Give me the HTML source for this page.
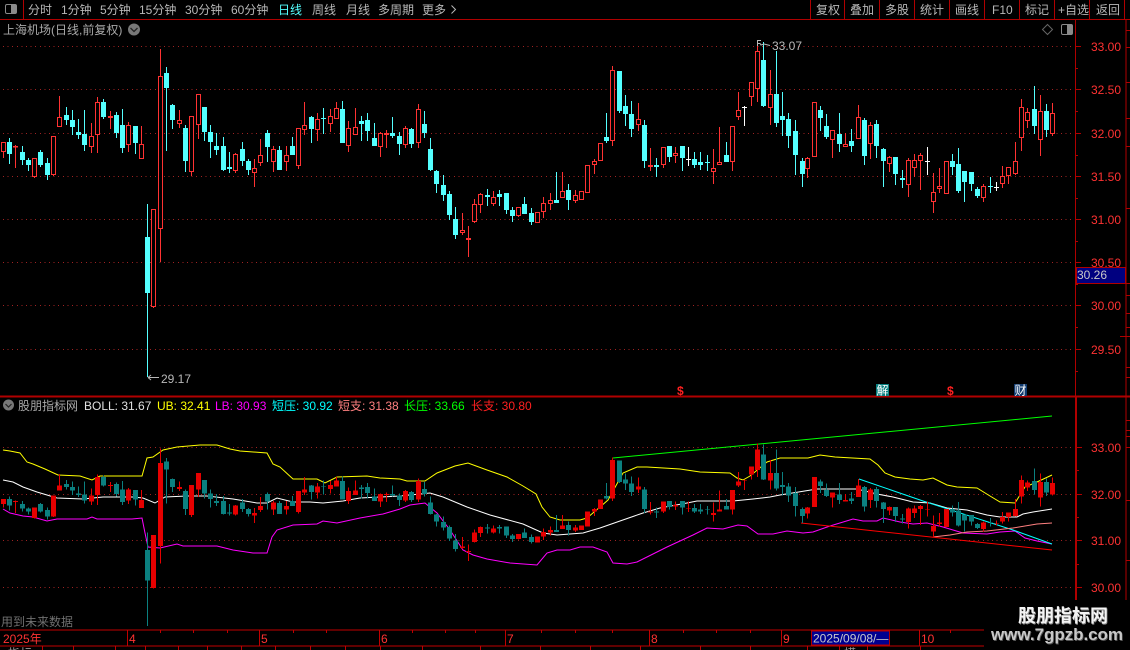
<!DOCTYPE html>
<html lang="zh">
<head>
<meta charset="utf-8">
<title>上海机场 日线</title>
<style>
html,body{margin:0;padding:0;background:#000;width:1130px;height:650px;overflow:hidden}
svg{display:block}
text{font-family:"Liberation Sans","Noto Sans CJK SC",sans-serif;font-size:12px}
.t{fill:#b8b8b8}
.r{fill:#ff3232}
</style>
</head>
<body>
<svg width="1130" height="650" viewBox="0 0 1130 650" xmlns="http://www.w3.org/2000/svg">
<defs>
<path id="rw" d="M3.5 142V158M15.5 145V168M34.5 158V178M53.5 136V176M59.5 96V127M91.5 123V153M97.5 97V153M110.5 111V129M128.5 122V152M141.5 126V159M153.5 209V308M160.5 49V262M179.5 110V128M191.5 116V176M198.5 94V139M235.5 153V173M254.5 159V187M260.5 139V166M273.5 146V172M286.5 146V171M298.5 128V169M304.5 102V135M317.5 113V141M330.5 109V132M336.5 102V119M348.5 121V152M355.5 108V135M380.5 132V157M386.5 130V148M405.5 126V148M418.5 104V148M462.5 213V235M468.5 226V257M474.5 199V223M480.5 193V213M493.5 191V206M518.5 207V217M537.5 212V223M543.5 197V218M550.5 193V210M562.5 172V198M575.5 190V203M581.5 191V200M587.5 165V193M594.5 159V174M600.5 143V161M612.5 66V146M638.5 103V131M650.5 148V171M663.5 147V168M675.5 147V163M713.5 149V184M719.5 127V165M732.5 126V171M738.5 92V120M751.5 82V106M757.5 40V102M770.5 70V125M807.5 157V178M814.5 102V157M832.5 130V158M845.5 133V147M858.5 105V139M870.5 122V159M889.5 156V172M908.5 158V197M914.5 154V177M920.5 153V190M933.5 173V213M939.5 168V193M946.5 161V194M983.5 184V202M1002.5 166V188M1008.5 167V184M1015.5 142V175M1021.5 99V151M1027.5 108V128M1040.5 95V156M1052.5 103V136"/>
<path id="rb" d="M1.5 142.5h4V151.5h-4zM13.5 146.5h4V147h-4zM32.5 158.5h4V176.5h-4zM51.5 136.5h4V174.5h-4zM57.5 117.5h4V126.5h-4zM89.5 136.5h4V146.5h-4zM95.5 102.5h4V134.5h-4zM108.5 116.5h4V117.5h-4zM126.5 125.5h4V144.5h-4zM139.5 144.5h4V158.5h-4zM151.5 209.5h4V306.5h-4zM158.5 76.5h4V228.5h-4zM177.5 120.5h4V123.5h-4zM189.5 116.5h4V171.5h-4zM196.5 94.5h4V124.5h-4zM233.5 154.5h4V170.5h-4zM252.5 168.5h4V172.5h-4zM258.5 155.5h4V162.5h-4zM271.5 149.5h4V161.5h-4zM284.5 155.5h4V161.5h-4zM296.5 128.5h4V165.5h-4zM302.5 125.5h4V129.5h-4zM315.5 119.5h4V129.5h-4zM328.5 116.5h4V123.5h-4zM334.5 108.5h4V118.5h-4zM346.5 128.5h4V145.5h-4zM353.5 127.5h4V134.5h-4zM378.5 133.5h4V146.5h-4zM384.5 133.5h4V134.5h-4zM403.5 128.5h4V144.5h-4zM416.5 109.5h4V142.5h-4zM460.5 230.5h4V232.5h-4zM466.5 238.5h4V239.5h-4zM472.5 204.5h4V221.5h-4zM478.5 194.5h4V204.5h-4zM491.5 197.5h4V203.5h-4zM516.5 207.5h4V215.5h-4zM535.5 212.5h4V222.5h-4zM541.5 203.5h4V211.5h-4zM548.5 200.5h4V203.5h-4zM560.5 191.5h4V197.5h-4zM573.5 195.5h4V200.5h-4zM579.5 191.5h4V199.5h-4zM585.5 165.5h4V192.5h-4zM592.5 161.5h4V164.5h-4zM598.5 143.5h4V160.5h-4zM610.5 70.5h4V140.5h-4zM636.5 119.5h4V124.5h-4zM648.5 165.5h4V166.5h-4zM661.5 147.5h4V164.5h-4zM673.5 153.5h4V155.5h-4zM711.5 168.5h4V171.5h-4zM717.5 162.5h4V164.5h-4zM730.5 126.5h4V161.5h-4zM736.5 110.5h4V116.5h-4zM749.5 82.5h4V96.5h-4zM755.5 51.5h4V88.5h-4zM768.5 94.5h4V107.5h-4zM805.5 158.5h4V168.5h-4zM812.5 102.5h4V156.5h-4zM830.5 130.5h4V139.5h-4zM843.5 144.5h4V146.5h-4zM856.5 117.5h4V138.5h-4zM868.5 125.5h4V143.5h-4zM887.5 157.5h4V163.5h-4zM906.5 160.5h4V184.5h-4zM912.5 160.5h4V167.5h-4zM918.5 155.5h4V160.5h-4zM931.5 192.5h4V201.5h-4zM937.5 186.5h4V188.5h-4zM944.5 161.5h4V193.5h-4zM981.5 186.5h4V197.5h-4zM1000.5 176.5h4V183.5h-4zM1006.5 167.5h4V175.5h-4zM1013.5 161.5h4V173.5h-4zM1019.5 107.5h4V137.5h-4zM1025.5 112.5h4V120.5h-4zM1038.5 111.5h4V139.5h-4zM1050.5 113.5h4V133.5h-4z"/>
<path id="cw" d="M9.5 138V164M22.5 146V165M28.5 158V171M40.5 150V167M47.5 158V180M66.5 107V125M72.5 110V135M78.5 119V139M84.5 110V151M103.5 99V119M116.5 112V138M122.5 109V153M135.5 126V154M147.5 204V377M166.5 67V151M172.5 104V129M185.5 125V172M204.5 107V141M210.5 125V158M216.5 133V155M223.5 137V171M229.5 152V173M242.5 142V166M248.5 159V175M267.5 130V162M279.5 146V170M292.5 137V155M311.5 116V143M323.5 108V134M342.5 101V143M361.5 116V141M367.5 113V141M374.5 123V146M392.5 117V138M399.5 132V155M411.5 128V148M424.5 111V138M430.5 138V171M436.5 170V193M443.5 175V201M449.5 191V220M455.5 207V239M487.5 189V206M499.5 190V206M506.5 193V214M512.5 207V222M524.5 197V214M531.5 208V225M556.5 172V203M568.5 184V210M606.5 113V143M619.5 71V113M625.5 95V126M631.5 101V137M644.5 120V168M656.5 158V177M669.5 146V162M682.5 146V171M694.5 152V168M700.5 152V170M707.5 155V171M726.5 142V162M763.5 42V107M776.5 51V127M782.5 92V136M788.5 113V148M795.5 120V175M802.5 158V187M820.5 106V131M826.5 114V139M839.5 113V152M851.5 129V152M864.5 118V165M876.5 120V158M883.5 148V187M895.5 157V185M902.5 170V188M952.5 154V175M958.5 148V193M964.5 171V202M971.5 172V191M977.5 187V198M990.5 177V193M1034.5 86V134M1046.5 104V137"/>
<path id="cb" d="M7 142h5V154h-5zM20 152h5V160h-5zM26 160h5V165h-5zM38 152h5V165h-5zM45 163h5V175h-5zM64 115h5V120h-5zM70 120h5V127h-5zM76 132h5V135h-5zM82 134h5V145h-5zM101 102h5V117h-5zM114 115h5V133h-5zM120 125h5V148h-5zM133 126h5V143h-5zM145 237h5V293h-5zM164 73h5V88h-5zM170 105h5V120h-5zM183 128h5V161h-5zM202 107h5V132h-5zM208 132h5V142h-5zM214 146h5V150h-5zM221 146h5V170h-5zM227 167h5V169h-5zM240 149h5V161h-5zM246 161h5V170h-5zM265 133h5V147h-5zM277 150h5V170h-5zM290 146h5V155h-5zM309 117h5V129h-5zM321 118h5V119h-5zM340 109h5V143h-5zM359 121h5V124h-5zM365 120h5V131h-5zM372 138h5V146h-5zM390 133h5V136h-5zM397 136h5V144h-5zM409 129h5V144h-5zM422 124h5V133h-5zM428 149h5V170h-5zM434 171h5V184h-5zM441 185h5V195h-5zM447 194h5V215h-5zM453 219h5V235h-5zM485 195h5V197h-5zM497 194h5V197h-5zM504 193h5V210h-5zM510 210h5V216h-5zM522 204h5V214h-5zM529 213h5V222h-5zM554 200h5V203h-5zM566 190h5V200h-5zM604 137h5V141h-5zM617 71h5V111h-5zM623 106h5V114h-5zM629 114h5V129h-5zM642 125h5V161h-5zM654 165h5V167h-5zM667 146h5V157h-5zM680 146h5V158h-5zM692 159h5V165h-5zM698 162h5V165h-5zM705 162h5V163h-5zM724 155h5V162h-5zM761 60h5V106h-5zM774 94h5V123h-5zM780 116h5V120h-5zM786 119h5V136h-5zM793 131h5V155h-5zM800 161h5V174h-5zM818 110h5V118h-5zM824 126h5V137h-5zM837 134h5V144h-5zM849 141h5V146h-5zM862 120h5V156h-5zM874 124h5V146h-5zM881 149h5V161h-5zM893 157h5V174h-5zM900 178h5V180h-5zM950 161h5V167h-5zM956 164h5V191h-5zM962 171h5V182h-5zM969 172h5V184h-5zM975 189h5V196h-5zM988 186h5V187h-5zM1032 109h5V126h-5zM1044 111h5V130h-5z"/>
<path id="ww" d="M688.5 147V166M744.5 106V126M927.5 147V175M996.5 182V191"/>
<path id="wb" d="M686 159h5V160h-5zM742 107h5V108h-5zM925 161h5V162h-5zM994 187h5V188h-5z"/>
</defs>

<rect width="1130" height="650" fill="#000"/>

<!-- grid -->
<g stroke="#a02222" stroke-width="1" stroke-dasharray="1 3.6" fill="none" shape-rendering="crispEdges">
<path d="M3 46.5H1075M3 89.5H1075M3 133.5H1075M3 176.5H1075M3 219.5H1075M3 262.5H1075M3 305.5H1075M3 349.5H1075"/>
<path d="M3 447.5H1075M3 494.5H1075M3 540.5H1075M3 587.5H1075"/>
</g>

<!-- top chart candles -->
<g shape-rendering="crispEdges">
<use href="#rw" stroke="#ff3232" fill="none"/>
<use href="#rb" stroke="#ff3232" fill="#000"/>
<use href="#cw" stroke="#54ffff" fill="none"/>
<use href="#cb" fill="#54ffff"/>
<use href="#ww" stroke="#fff" fill="none"/>
<use href="#wb" fill="#fff"/>
</g>

<!-- BOLL lines -->
<g fill="none" stroke-width="1">
<polyline stroke="#ffff00" points="3,450 10,451 20,453 27,462 33,464 45,469 58,475 80,476 92,480 100,476 142,476 147,458 153,457 163,450 177,447 200,445 217,445 230,449 240,451 267,453 273,464 280,467 293,479 317,479 325,483 337,477 367,476 380,478 400,479 407,481 425,481 437,473 455,466 468,463 487,470 507,477 523,486 536,494 542,507 550,517 560,520 580,520 587,518 600,507 608,500 623,473 637,467 647,467 680,469 700,472 730,473 737,478 743,480 750,476 767,462 780,458 808,458 820,455 835,457 870,459 878,465 885,473 895,477 910,479 923,480 933,478 947,485 957,487 977,488 990,496 1000,502 1015,503 1025,487 1037,482 1052,475"/>
<polyline stroke="#ffffff" points="3,480 13,482 23,487 37,492 57,498 83,499 103,497 133,497 143,498 155,503 165,497 187,496 207,496 233,499 257,503 267,503 277,498 293,502 310,502 323,503 343,501 360,498 400,496 430,493 443,497 467,507 490,515 523,524 543,533 557,535 583,533 600,528 620,521 643,513 660,508 687,503 697,501 733,501 753,499 770,497 780,495 817,489 857,489 877,494 893,497 913,502 930,503 947,508 967,510 987,515 1000,517 1017,517 1023,514 1033,512 1052,509"/>
<polyline stroke="#ff00ff" points="3,509 10,513 23,516 33,517 47,521 57,519 87,519 92,517 97,519 132,519 142,518 145,533 148,547 160,548 177,544 183,546 217,546 233,550 253,553 267,553 272,537 277,530 293,525 317,524 323,521 337,523 360,518 383,514 400,509 410,505 425,503 437,513 450,530 463,550 473,555 487,559 510,563 537,565 547,553 557,550 570,550 580,547 593,547 607,552 613,563 627,564 637,562 667,547 693,535 707,528 723,529 738,525 747,526 758,534 773,534 787,531 803,533 813,532 830,526 853,519 863,521 877,521 883,518 900,522 913,524 927,523 943,527 963,533 987,534 1000,532 1015,531 1025,538 1037,541 1052,544"/>
<polyline stroke="#00ff00" points="613,458 1052,416"/>
<polyline stroke="#00ffff" points="859,479 923,501 1013,530 1052,544"/>
<polyline stroke="#ff8080" points="933,537 950,535 967,532 987,531 1013,528 1037,524 1052,523"/>
<polyline stroke="#ff0000" points="801,523 1052,550"/>
</g>

<!-- bottom chart candles -->
<g transform="matrix(1 0 0 .541 0 422)" shape-rendering="crispEdges">
<use href="#rw" stroke="#e60000" fill="none"/>
<use href="#rb" stroke="#e60000" fill="#e60000"/>
<use href="#cw" stroke="#0b8080" fill="none"/>
<use href="#cb" fill="#0b8080"/>
<use href="#ww" stroke="#e60000" fill="none"/>
<use href="#wb" fill="#e60000"/>
</g>

<!-- frame lines -->
<g stroke="#b00000" fill="none" shape-rendering="crispEdges">
<path d="M0 19.5H1130M23.5 0V19M810.5 0V19M844.5 0V19M879.5 0V19M914.5 0V19M949.5 0V19M984.5 0V19M1019.5 0V19M1054.5 0V19M1089.5 0V19M1124.5 0V19"/>
<path d="M1075.5 19V600M1126 19V600" />
<path d="M0 396.5H1130" stroke-width="2"/>
<path d="M1076.5 397.5V600" stroke-width="1"/>
<path d="M1075 46.5H1081M1075 89.5H1081M1075 133.5H1081M1075 176.5H1081M1075 219.5H1081M1075 262.5H1081M1075 305.5H1081M1075 349.5H1081M1075 68.5H1078M1075 111.5H1078M1075 155.5H1078M1075 198.5H1078M1075 241.5H1078M1075 284.5H1078M1075 327.5H1078M1075 371.5H1078"/>
<path d="M1076 447.5H1082M1076 494.5H1082M1076 540.5H1082M1076 587.5H1082M1076 470.5H1079M1076 517.5H1079M1076 564.5H1079"/>
<path d="M1126 30.5H1130M1126 47.5H1130M1126 82.5H1130M1126 118.5H1130M1126 146.5H1130M1126 208.5H1130M1126 283.5H1130M1126 295.5H1130M1126 313.5H1130M1126 327.5H1130M1126 367.5H1130M1126 377.5H1130M1120 336.5H1130"/>
<path d="M1126 420.5H1130M1126 430.5H1130M1126 436.5H1130M1126 447.5H1130M1126 500.5H1130M1126 560.5H1130"/>
</g>

<!-- toolbar left -->
<rect x="5.5" y="4.5" width="11" height="9" rx="1.5" fill="none" stroke="#8a8a8a"/>
<rect x="11" y="5" width="5" height="8" fill="#8a8a8a"/>
<text class="t" x="28" y="14">分时</text>
<text class="t" x="61" y="14">1分钟</text>
<text class="t" x="100" y="14">5分钟</text>
<text class="t" x="139" y="14">15分钟</text>
<text class="t" x="185" y="14">30分钟</text>
<text class="t" x="231" y="14">60分钟</text>
<text x="278" y="14" fill="#54ffff">日线</text>
<text class="t" x="312" y="14">周线</text>
<text class="t" x="346" y="14">月线</text>
<text class="t" x="378" y="14">多周期</text>
<text class="t" x="422" y="14">更多</text>
<path d="M451.5 5.5l4 4-4 4" fill="none" stroke="#b8b8b8"/>

<!-- toolbar right -->
<text class="t" x="816" y="14">复权</text>
<text class="t" x="850" y="14">叠加</text>
<text class="t" x="885" y="14">多股</text>
<text class="t" x="920" y="14">统计</text>
<text class="t" x="955" y="14">画线</text>
<text class="t" x="992" y="14">F10</text>
<text class="t" x="1025" y="14">标记</text>
<text class="t" x="1058" y="14">+自选</text>
<text class="t" x="1096" y="14">返回</text>

<!-- title -->
<text x="3" y="34" fill="#a8a8a8">上海机场(日线,前复权)</text>
<circle cx="134" cy="29.5" r="6" fill="#777"/>
<path d="M130.5 28l3.5 3.5 3.5-3.5" fill="none" stroke="#222" stroke-width="1.3"/>

<path d="M1047.5 24.5l5 5-5 5-5-5z" fill="none" stroke="#666"/>
<rect x="1061.5" y="24.5" width="11" height="10" rx="1.5" fill="none" stroke="#8a8a8a"/>
<rect x="1067" y="25" width="5" height="9" fill="#8a8a8a"/>

<!-- hi / lo labels -->
<path d="M757.5 46V40.5H761M757 43.5H760l1 1.5 3-1 6 1.5" fill="none" stroke="#b8b8b8"/>
<text x="772" y="50" fill="#b8b8b8">33.07</text>
<path d="M148 377.5H159M148 377.5l3-2.5M148 377.5l3 2.5" fill="none" stroke="#b8b8b8"/>
<text x="161" y="383" fill="#b8b8b8">29.17</text>

<!-- axis labels -->
<text class="r" x="1091" y="51">33.00</text>
<text class="r" x="1091" y="94">32.50</text>
<text class="r" x="1091" y="138">32.00</text>
<text class="r" x="1091" y="181">31.50</text>
<text class="r" x="1091" y="224">31.00</text>
<text class="r" x="1091" y="267">30.50</text>
<text class="r" x="1091" y="310">30.00</text>
<text class="r" x="1091" y="354">29.50</text>
<text class="r" x="1091" y="452">33.00</text>
<text class="r" x="1091" y="499">32.00</text>
<text class="r" x="1091" y="545">31.00</text>
<text class="r" x="1091" y="592">30.00</text>
<rect x="1076.5" y="267.5" width="49" height="16" fill="#000080" stroke="#b00000"/>
<text x="1077" y="279" fill="#c8c8c8">30.26</text>

<!-- event markers -->
<text x="677" y="395" fill="#ff2020" font-weight="bold">$</text>
<rect x="876" y="384" width="13" height="12" fill="#0a8080"/>
<text x="876.5" y="394.5" fill="#fff">解</text>
<text x="947" y="395" fill="#ff2020" font-weight="bold">$</text>
<rect x="1014" y="384" width="13" height="12" fill="#103a6e"/>
<text x="1014.5" y="394.5" fill="#fff">财</text>

<!-- legend -->
<circle cx="8.5" cy="405" r="5.5" fill="#777"/>
<path d="M5.5 404l3 3 3-3" fill="none" stroke="#222" stroke-width="1.2"/>
<text x="18" y="410" fill="#a8a8a8">股朋指标网</text>
<text x="84" y="410" fill="#e0e0e0">BOLL: 31.67</text>
<text x="157" y="410" fill="#ffff00">UB: 32.41</text>
<text x="215" y="410" fill="#ff00ff">LB: 30.93</text>
<text x="272" y="410" fill="#00ffff">短压: 30.92</text>
<text x="338" y="410" fill="#ff8080">短支: 31.38</text>
<text x="404" y="410" fill="#00ff00">长压: 33.66</text>
<text x="471" y="410" fill="#ff2020">长支: 30.80</text>

<text x="1" y="626" fill="#707070">用到未来数据</text>

<!-- time bar -->
<g stroke="#c00000" fill="none" shape-rendering="crispEdges">
<path d="M0 630H984M0 646H984" />
<path d="M127.5 630V646M259.5 630V646M379.5 630V646M505.5 630V646M649.5 630V646M781.5 630V646M919.5 630V646"/>
<path d="M160.5 630V633M193.5 630V633M227.5 630V633M293.5 630V633M326.5 630V633M412.5 630V633M445.5 630V633M475.5 630V633M541.5 630V633M575.5 630V633M612.5 630V633M683.5 630V633M716.5 630V633M750.5 630V633M950.5 630V633"/>
<path d="M42.5 646V650M73.5 646V650M115.5 646V650M145.5 646V650M178.5 646V650M207.5 646V650M241.5 646V650M275.5 646V650M310.5 646V650M345.5 646V650M380.5 646V650M422.5 646V650M480.5 646V650M540.5 646V650M590.5 646V650M640.5 646V650M700.5 646V650M750.5 646V650M807.5 646V650M839.5 646V650M867.5 646V650M920.5 646V650"/>
</g>
<text class="r" x="3" y="643">2025年</text>
<text class="r" x="129" y="643">4</text>
<text class="r" x="261" y="643">5</text>
<text class="r" x="381" y="643">6</text>
<text class="r" x="507" y="643">7</text>
<text class="r" x="651" y="643">8</text>
<text class="r" x="783" y="643">9</text>
<rect x="811.5" y="631" width="78" height="14" fill="#000090" stroke="#b00000"/>
<text x="813" y="642.5" fill="#c8c8c8">2025/09/08/—</text>
<text class="r" x="921" y="643">10</text>
<text x="8" y="657.5" fill="#999">指标</text>
<text x="844" y="657.5" fill="#999">模</text>

<!-- watermark -->
<rect x="984" y="600" width="146" height="50" fill="#000"/>
<text x="1018.8" y="622.8" fill="#8a8a8a" font-weight="bold" style="font-size:18px">股朋指标网</text>
<text x="1018" y="622" fill="#f4f4f4" font-weight="bold" style="font-size:18px">股朋指标网</text>
<text x="991.8" y="640.8" fill="#555" font-weight="bold" style="font-size:17px" textLength="132">www.7gpzb.com</text>
<text x="991" y="640" fill="#c8c8c8" font-weight="bold" style="font-size:17px" textLength="132">www.7gpzb.com</text>
</svg>
</body>
</html>
